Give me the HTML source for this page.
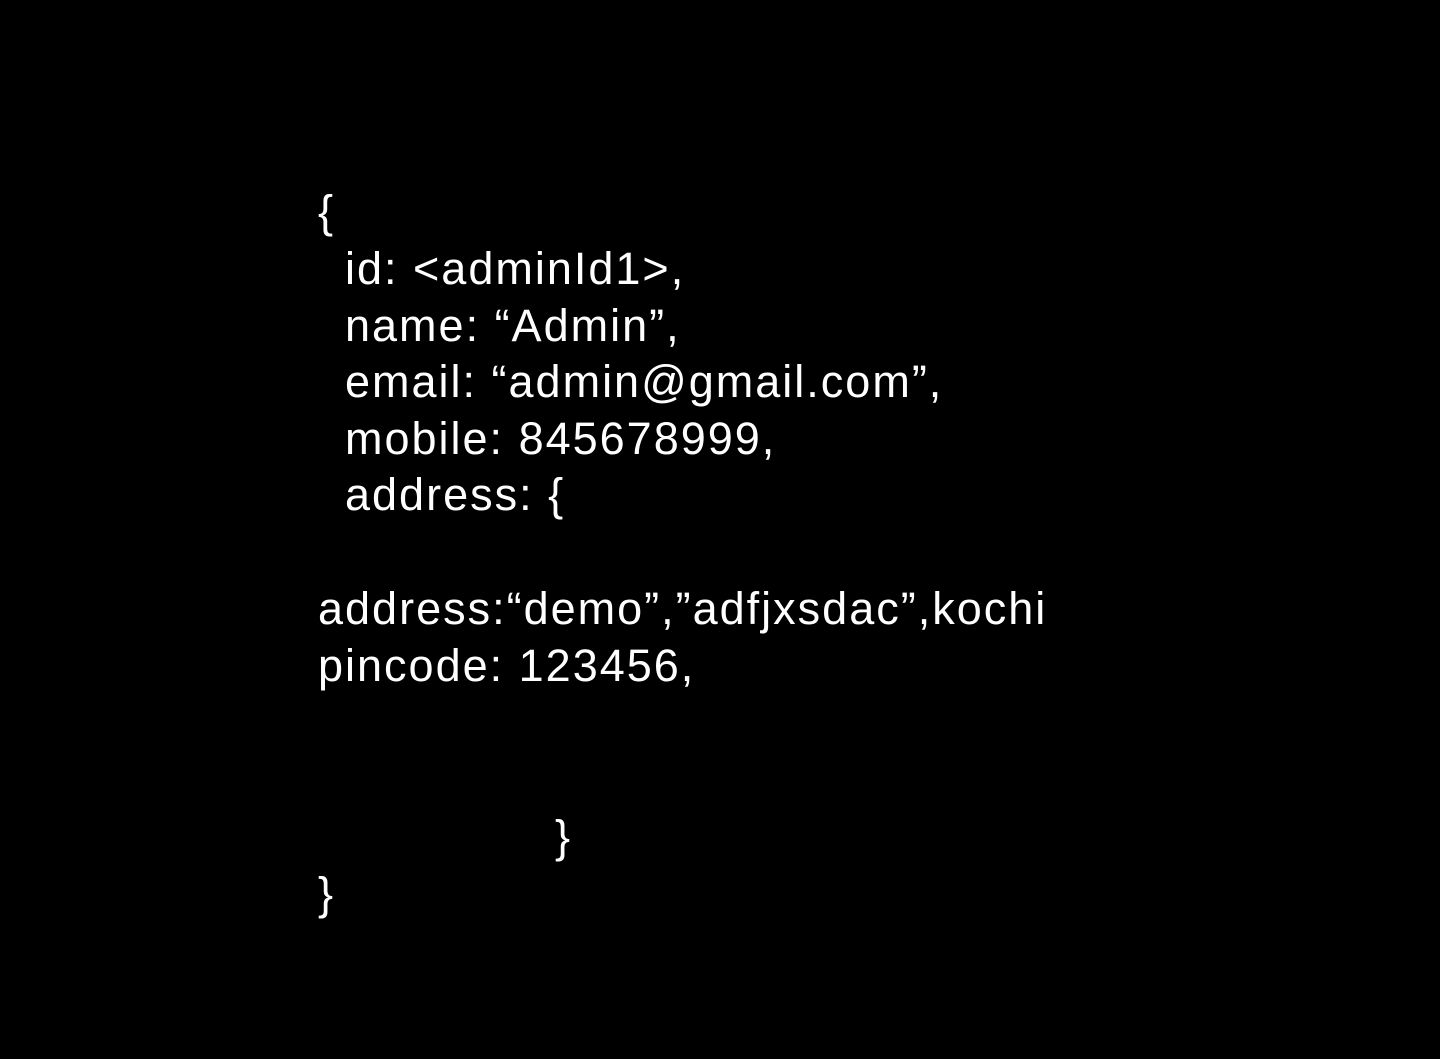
<!DOCTYPE html>
<html><head><meta charset="utf-8"><style>
html,body{margin:0;padding:0;background:#000;}
body{width:1440px;height:1059px;overflow:hidden;position:relative;font-family:"Liberation Sans",sans-serif;color:#fff;font-size:45px;letter-spacing:2px;}
.l{position:absolute;white-space:pre;line-height:57px;}
</style></head><body>
<div class="l" style="left:318px;top:183px">{</div>
<div class="l" style="left:345px;top:240px">id: &lt;adminId1&gt;,</div>
<div class="l" style="left:345px;top:297px">name: “Admin”,</div>
<div class="l" style="left:345px;top:353px">email: “admin@gmail.com”,</div>
<div class="l" style="left:345px;top:410px">mobile: 845678999,</div>
<div class="l" style="left:345px;top:466px">address: {</div>
<div class="l" style="left:318px;top:580px">address:“demo”,”adfjxsdac”,kochi</div>
<div class="l" style="left:318px;top:637px">pincode: 123456,</div>
<div class="l" style="left:555px;top:808px">}</div>
<div class="l" style="left:318px;top:865px">}</div>
</body></html>
